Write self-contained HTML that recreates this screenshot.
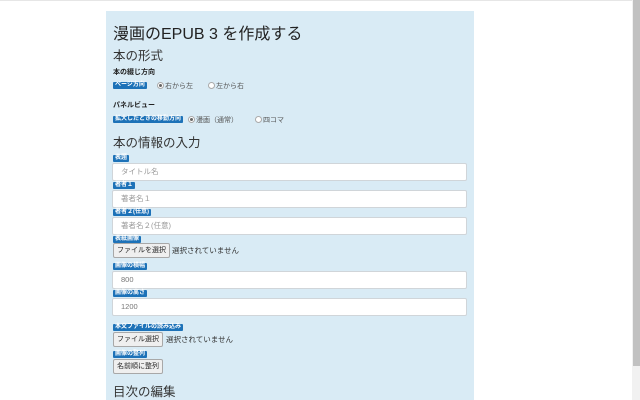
<!DOCTYPE html>
<html><head><meta charset="utf-8">
<style>
html,body{margin:0;padding:0;width:640px;height:400px;overflow:hidden;background:#fff;font-family:"Liberation Sans","Noto Sans CJK JP",sans-serif;color:#222;}
.topline{position:absolute;left:0;top:0;width:632px;height:1px;background:#e6e6e6;}
.sb{position:absolute;left:632px;top:0;width:8px;height:400px;background:#f1f1f1;}
.thumb{position:absolute;left:633px;top:0;width:7px;height:366px;background:#c1c1c1;}
.panel{position:absolute;left:106px;top:11px;width:368px;height:389px;background:#d9ebf5;}
.a{position:absolute;white-space:nowrap;}
.h1{font-size:16px;left:113px;top:20px;color:#222;}
.h2{font-size:12.5px;left:113px;color:#333;}
.b{font-size:7px;font-weight:bold;left:113px;color:#222;}
.badge{position:absolute;left:113px;background:#1d72b8;color:#fff;font-size:6px;font-weight:bold;height:7px;line-height:7px;padding:0 2px;border-radius:1px;white-space:nowrap;}
.inp{position:absolute;left:112px;height:16px;background:#fff;border:1px solid #d0d5d9;border-radius:2px;font-size:7.5px;color:#999;line-height:16px;padding-left:8px;width:345px;}
.btn{position:absolute;left:113px;height:13px;line-height:13px;background:#efefef;border:1px solid #a8a8a8;border-radius:2px;font-size:7px;color:#222;padding:0 3px;white-space:nowrap;}
.t{font-size:7.5px;color:#333;}
.r{font-size:7px;color:#555;}
.rd{display:inline-block;width:5px;height:5px;border:1px solid #aaa;border-radius:50%;background:#fff;vertical-align:middle;margin-right:1px;position:relative;top:-1px;}
.rd.on::after{content:"";position:absolute;left:1px;top:1px;width:3px;height:3px;border-radius:50%;background:#666;}
</style></head><body>
<div class="topline"></div>
<div class="sb"></div><div class="thumb"></div>
<div class="panel"></div>
<div class="a h1">漫画のEPUB 3 を作成する</div>
<div class="a h2" style="top:45px">本の形式</div>
<div class="a b" style="top:67px">本の綴じ方向</div>
<div class="badge" style="top:82px">ページ方向</div>
<div class="a r" style="left:157px;top:81px"><span class="rd on"></span>右から左</div>
<div class="a r" style="left:208px;top:81px"><span class="rd"></span>左から右</div>
<div class="a b" style="top:100px">パネルビュー</div>
<div class="badge" style="top:116px">拡大したときの移動方向</div>
<div class="a r" style="left:188px;top:115px"><span class="rd on"></span>漫画（通常）</div>
<div class="a r" style="left:255px;top:115px"><span class="rd"></span>四コマ</div>
<div class="a h2" style="top:132px">本の情報の入力</div>
<div class="badge" style="top:155px">表題</div>
<div class="inp" style="top:163px">タイトル名</div>
<div class="badge" style="top:182px">著者１</div>
<div class="inp" style="top:190px">著者名１</div>
<div class="badge" style="top:209px">著者２(任意)</div>
<div class="inp" style="top:217px">著者名２(任意)</div>
<div class="badge" style="top:236px">表紙画像</div>
<div class="btn" style="top:243px">ファイルを選択</div>
<div class="a t" style="left:172px;top:245px">選択されていません</div>
<div class="badge" style="top:263px">画像の横幅</div>
<div class="inp" style="top:271px;color:#777">800</div>
<div class="badge" style="top:290px">画像の高さ</div>
<div class="inp" style="top:298px;color:#777">1200</div>
<div class="badge" style="top:324px">本文ファイルの読み込み</div>
<div class="btn" style="top:332px">ファイル選択</div>
<div class="a t" style="left:166px;top:334px">選択されていません</div>
<div class="badge" style="top:351px">画像の整列</div>
<div class="btn" style="top:359px">名前順に整列</div>
<div class="a h2" style="top:381px">目次の編集</div>
</body></html>
